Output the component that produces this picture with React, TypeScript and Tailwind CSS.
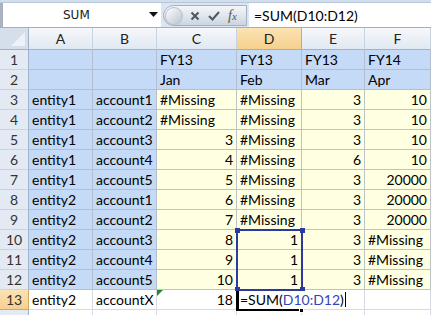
import React from "react";

type Fill = "blue" | "yellow" | "white";

const COLS = ["A", "B", "C", "D", "E", "F"];

// [A, B, C, D, E, F]
const ROWS: string[][] = [
  ["", "", "FY13", "FY13", "FY13", "FY14"],
  ["", "", "Jan", "Feb", "Mar", "Apr"],
  ["entity1", "account1", "#Missing", "#Missing", "3", "10"],
  ["entity1", "account2", "#Missing", "#Missing", "3", "10"],
  ["entity1", "account3", "3", "#Missing", "3", "10"],
  ["entity1", "account4", "4", "#Missing", "6", "10"],
  ["entity1", "account5", "5", "#Missing", "3", "20000"],
  ["entity2", "account1", "6", "#Missing", "3", "20000"],
  ["entity2", "account2", "7", "#Missing", "3", "20000"],
  ["entity2", "account3", "8", "1", "3", "#Missing"],
  ["entity2", "account4", "9", "1", "3", "#Missing"],
  ["entity2", "account5", "10", "1", "3", "#Missing"],
  ["entity2", "accountX", "18", "", "", ""],
  ["", "", "", "", "", ""],
];

const GRID = "grid grid-cols-[29px_64px_64px_80px_65px_63px_66px]";

function fillFor(row: number, col: number): Fill {
  if (row >= 13) return "white";
  if (row <= 2) return "blue";
  return col < 2 ? "blue" : "yellow";
}

const FILL_CLASS: Record<Fill, string> = {
  blue: "bg-[#C5DAF6] border-[#B4BFCC]",
  yellow: "bg-[#FFFFE1] border-[#BEC3C9]",
  white: "bg-white border-[#D6DBE3]",
};

function Cell({ value, row, col }: { value: string; row: number; col: number }) {
  const numeric = /^\d+$/.test(value);
  return (
    <div
      className={`relative h-[20px] border-r border-b px-[3px] leading-[19px] whitespace-nowrap overflow-hidden ${FILL_CLASS[fillFor(row, col)]} ${numeric ? "text-right" : "text-left"}`}
    >
      {row === 13 && col === 2 && (
        <svg className="absolute left-0 top-0" width="6" height="6">
          <polygon points="0,0 6,0 0,6" fill="#1F8A2E" />
        </svg>
      )}
      {value}
    </div>
  );
}

function FormulaBar() {
  return (
    <div className="flex flex-col">
      <div className="h-[3px] bg-[#D3DEEC] border-b border-[#B7C6D9]" />
      <div className="flex h-[24px] bg-[#DCE6F2]">
        <div className="w-[3px] bg-[#A9B3BF]" />
        <div className="relative flex w-[158px] items-center bg-white pl-[60px] text-[12px] text-[#1A1A1A] font-['DejaVu_Sans',sans-serif]">
          <span>SUM</span>
          <svg className="absolute right-[3px] top-[9px]" width="9" height="5">
            <polygon points="0,0 9,0 4.5,5" fill="#111" />
          </svg>
        </div>
        <div className="ml-[2px] mt-[2px] mb-[1px] flex w-[84px] items-center rounded-l-full border border-[#A3B1C4] bg-gradient-to-b from-[#F4F6F9] via-[#E2E7EE] to-[#CBD4E0]">
          <div className="ml-[1px] h-[18px] w-[18px] rounded-full border border-[#B6C0CD] bg-gradient-to-br from-[#FFFFFF] to-[#B9C3CF]" />
          <svg className="ml-[7px]" width="10" height="10" viewBox="0 0 10 10">
            <path d="M1.5 1.5 L8.5 8.5 M8.5 1.5 L1.5 8.5" stroke="#4E5660" strokeWidth="2" />
          </svg>
          <svg className="ml-[8px]" width="12" height="10" viewBox="0 0 12 10">
            <path d="M1 5 L4.5 8.5 L11 1" stroke="#4E5660" strokeWidth="2" fill="none" />
          </svg>
          <span className="ml-[8px] font-['Liberation_Serif',serif] text-[14px] italic leading-none text-[#4E5660]">
            f<span className="text-[11px]">x</span>
          </span>
        </div>
        <div className="ml-[2px] flex flex-1 items-center bg-white pl-[5px] text-[14px] text-black">
          =SUM(D10:D12)
        </div>
      </div>
      <div className="h-[1px] bg-[#9FB0C5]" />
    </div>
  );
}

function ColumnHeader() {
  return (
    <div className={`${GRID} h-[22px]`}>
      <div className="relative border-r border-b border-[#9EB2C9] bg-[#D5DFEC]">
        <svg className="absolute right-[3px] bottom-[3px]" width="14" height="14">
          <polygon points="14,0 14,14 0,14" fill="#EEF2F8" />
        </svg>
      </div>
      {COLS.map((c) =>
        c === "D" ? (
          <div
            key={c}
            className="flex items-center justify-center border-r border-b border-[#D7A75D] bg-gradient-to-b from-[#FBE3B4] to-[#F6D08D] text-[#222]"
          >
            {c}
          </div>
        ) : (
          <div
            key={c}
            className="flex items-center justify-center border-r border-b border-r-[#C8D3E0] border-b-[#9EB2C9] bg-gradient-to-b from-[#F6F8FB] to-[#E1E8F1] text-[#222]"
          >
            {c}
          </div>
        )
      )}
    </div>
  );
}

export default function App() {
  return (
    <div className="h-[315px] w-[431px] overflow-hidden bg-white font-['Lato',sans-serif] text-[14px] text-black">
      <FormulaBar />
      <ColumnHeader />
      <div className="relative">
        {ROWS.map((r, i) => {
          const row = i + 1;
          const active = row === 13;
          return (
            <div key={row} className={GRID}>
              <div
                className={`flex h-[20px] items-center justify-center border-r border-b ${
                  active
                    ? "border-[#D7A75D] bg-gradient-to-b from-[#FBE3B4] to-[#F6D08D]"
                    : "border-b-[#C9D4E2] border-r-[#9EB2C9] bg-[#E3EAF3]"
                } text-[#333]`}
              >
                {/* row 14 is only a sliver at the bottom edge, its label is not visible */}
                {row < 14 ? row : ""}
              </div>
              {r.map((v, c) =>
                active && c === 3 ? (
                  <div key={c} className="relative h-[20px] border-b border-[#D6DBE3] bg-white">
                    <span className="absolute left-[3px] top-0 z-10 whitespace-nowrap leading-[19px]">
                      =SUM(<span className="text-[#3346B8]">D10:D12</span>)
                      <span className="ml-[1px] inline-block h-[15px] w-[1px] translate-y-[2px] bg-black" />
                    </span>
                  </div>
                ) : (
                  <Cell key={c} value={v} row={row} col={c} />
                )
              )}
            </div>
          );
        })}

        {/* selection D10:D12 */}
        <div className="pointer-events-none absolute left-[236px] top-[179px] h-[62px] w-[67px] border-2 border-[#2A3A9E]" />
        <div className="absolute left-[235px] top-[178px] h-[5px] w-[5px] bg-[#2A3A9E]" />
        <div className="absolute left-[300px] top-[178px] h-[5px] w-[5px] bg-[#2A3A9E]" />
        <div className="absolute left-[235px] top-[237px] h-[4px] w-[5px] bg-[#2A3A9E]" />
        <div className="absolute left-[300px] top-[237px] h-[4px] w-[5px] bg-[#2A3A9E]" />

        {/* active cell D13 */}
        <div className="absolute left-[236px] top-[241px] h-[20px] w-[3px] bg-black" />
        <div className="absolute left-[236px] top-[259px] h-[2px] w-[66px] bg-black" />
        <div className="absolute left-[299px] top-[258px] h-[5px] w-[5px] border border-white bg-black" />
      </div>
    </div>
  );
}
